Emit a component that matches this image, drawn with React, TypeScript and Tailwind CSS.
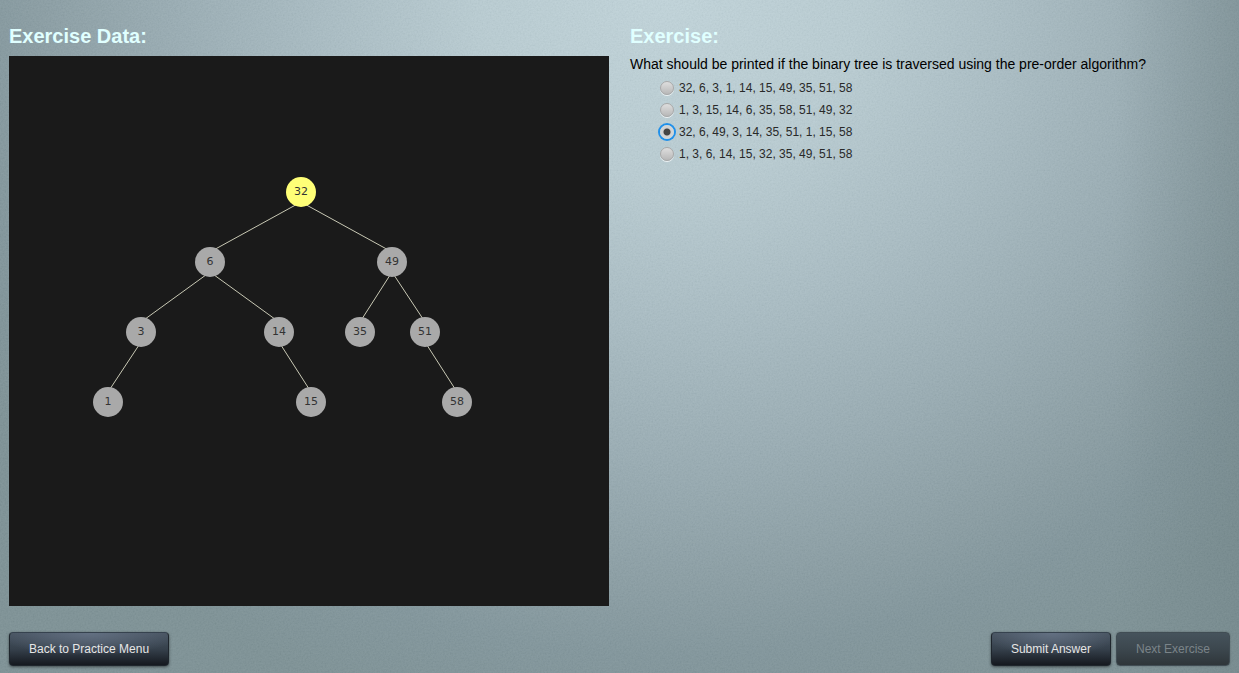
import { useState } from "react";

const nodes = [
  { value: 32, x: 292, y: 136, active: true },
  { value: 6, x: 201, y: 206 },
  { value: 49, x: 383, y: 206 },
  { value: 3, x: 132, y: 276 },
  { value: 14, x: 270, y: 276 },
  { value: 35, x: 351, y: 276 },
  { value: 51, x: 416, y: 276 },
  { value: 1, x: 99, y: 346 },
  { value: 15, x: 302, y: 346 },
  { value: 58, x: 448, y: 346 },
];

const edges: [number, number][] = [
  [0, 1],
  [0, 2],
  [1, 3],
  [1, 4],
  [2, 5],
  [2, 6],
  [3, 7],
  [4, 8],
  [6, 9],
];

const answers = [
  "32, 6, 3, 1, 14, 15, 49, 35, 51, 58",
  "1, 3, 15, 14, 6, 35, 58, 51, 49, 32",
  "32, 6, 49, 3, 14, 35, 51, 1, 15, 58",
  "1, 3, 6, 14, 15, 32, 35, 49, 51, 58",
];

function Grain() {
  return (
    <svg aria-hidden="true" className="pointer-events-none absolute inset-0 h-full w-full opacity-8">
      <filter id="grain" x="0" y="0" width="100%" height="100%">
        <feTurbulence type="fractalNoise" baseFrequency="0.6" numOctaves="2" stitchTiles="stitch" />
        <feColorMatrix type="matrix" values="1 0 0 0 0  1 0 0 0 0.05  1 0 0 0 0.06  0 0 0 0 1" />
      </filter>
      <rect width="100%" height="100%" filter="url(#grain)" />
    </svg>
  );
}

function BinaryTree() {
  return (
    <svg viewBox="0 0 600 550" role="img" aria-label="Binary tree" className="block w-full bg-[#1a1a1a]">
      {edges.map(([from, to]) => (
        <line
          key={`${from}-${to}`}
          x1={nodes[from].x}
          y1={nodes[from].y + 10}
          x2={nodes[to].x}
          y2={nodes[to].y - 10}
          className="stroke-[#c8c8b4] stroke-1"
        />
      ))}
      {nodes.map((node) => (
        <g key={node.value}>
          <circle cx={node.x} cy={node.y} r="15" className={node.active ? "fill-[#ffff77]" : "fill-[#a9a9a9]"} />
          <text
            x={node.x}
            y={node.y + 3}
            textAnchor="middle"
            className="fill-[#333333] font-['DejaVu_Sans',sans-serif] text-[11px]"
          >
            {node.value}
          </text>
        </g>
      ))}
    </svg>
  );
}

const enabledButton =
  "border-[#1f262d] border-t-[#36424e] bg-[radial-gradient(ellipse_60%_70%_at_50%_0%,#637082_0%,transparent_100%),linear-gradient(to_bottom,#46525f_0%,#36414c_50%,#15191f_100%)] text-[#e6e6e6] shadow-[0_1px_3px_rgba(0,0,0,0.5)]";
const disabledButton =
  "border-[#414d54] bg-[linear-gradient(to_bottom,#46535c_0%,#3c474e_50%,#2f363a_100%)] text-[#7b8489] shadow-[0_0_2px_rgba(0,0,0,0.3)]";

function ActionButton({ children, disabled = false }: { children: string; disabled?: boolean }) {
  return (
    <button
      type="button"
      disabled={disabled}
      className={`h-[34px] rounded border px-[19px] text-xs ${disabled ? disabledButton : enabledButton}`}
    >
      {children}
    </button>
  );
}

export default function App() {
  const [selected, setSelected] = useState(2);

  return (
    <div className="relative flex min-h-screen flex-col bg-[linear-gradient(to_right,transparent_90%,rgba(104,124,128,0.4)_100%),radial-gradient(ellipse_62%_106%_at_54%_0%,#c1d4da_0%,#b9ccd2_25%,#a9bcc3_45%,#98abb2_65%,#899ca2_82%,#80949a_92%,#7c9094_105%)] font-['Liberation_Sans',Arial,sans-serif]">
      <Grain />
      <main className="relative grid grow grid-cols-2 items-start gap-[21px] px-[9px] pt-6">
        <section>
          <h2 className="mb-2 text-xl leading-6 font-bold text-[#e0ffff]">Exercise Data:</h2>
          <BinaryTree />
        </section>
        <section>
          <h2 className="mb-[6px] text-xl leading-6 font-bold text-[#e0ffff]">Exercise:</h2>
          <fieldset>
            <legend className="text-sm leading-5 text-black">
              What should be printed if the binary tree is traversed using the pre-order algorithm?
            </legend>
            <div className="mt-[3px] flex flex-col items-start pl-[30px]">
              {answers.map((answer, index) => (
                <label key={answer} className="flex h-[22px] items-center gap-[5px] text-xs text-[#292929]">
                  <input
                    type="radio"
                    name="traversal"
                    checked={selected === index}
                    onChange={() => setSelected(index)}
                    className={`h-[14px] w-[14px] appearance-none rounded-full border ${
                      selected === index
                        ? "border-[#c9d6dc] bg-[radial-gradient(circle,#444444_0px,#444444_3px,#d0d0d0_4px,#dddddd_100%)] shadow-[0_0_0_2px_#2090ea]"
                        : "border-[#a9a9a9] bg-[linear-gradient(to_bottom,#dedede,#b8b8b8)] shadow-[0_1px_0_rgba(255,255,255,0.7)]"
                    }`}
                  />
                  {answer}
                </label>
              ))}
            </div>
          </fieldset>
        </section>
      </main>
      <footer className="relative flex justify-between px-[9px] pb-[7px] pt-[26px]">
        <ActionButton>Back to Practice Menu</ActionButton>
        <div className="flex gap-[5px]">
          <ActionButton>Submit Answer</ActionButton>
          <ActionButton disabled>Next Exercise</ActionButton>
        </div>
      </footer>
    </div>
  );
}
